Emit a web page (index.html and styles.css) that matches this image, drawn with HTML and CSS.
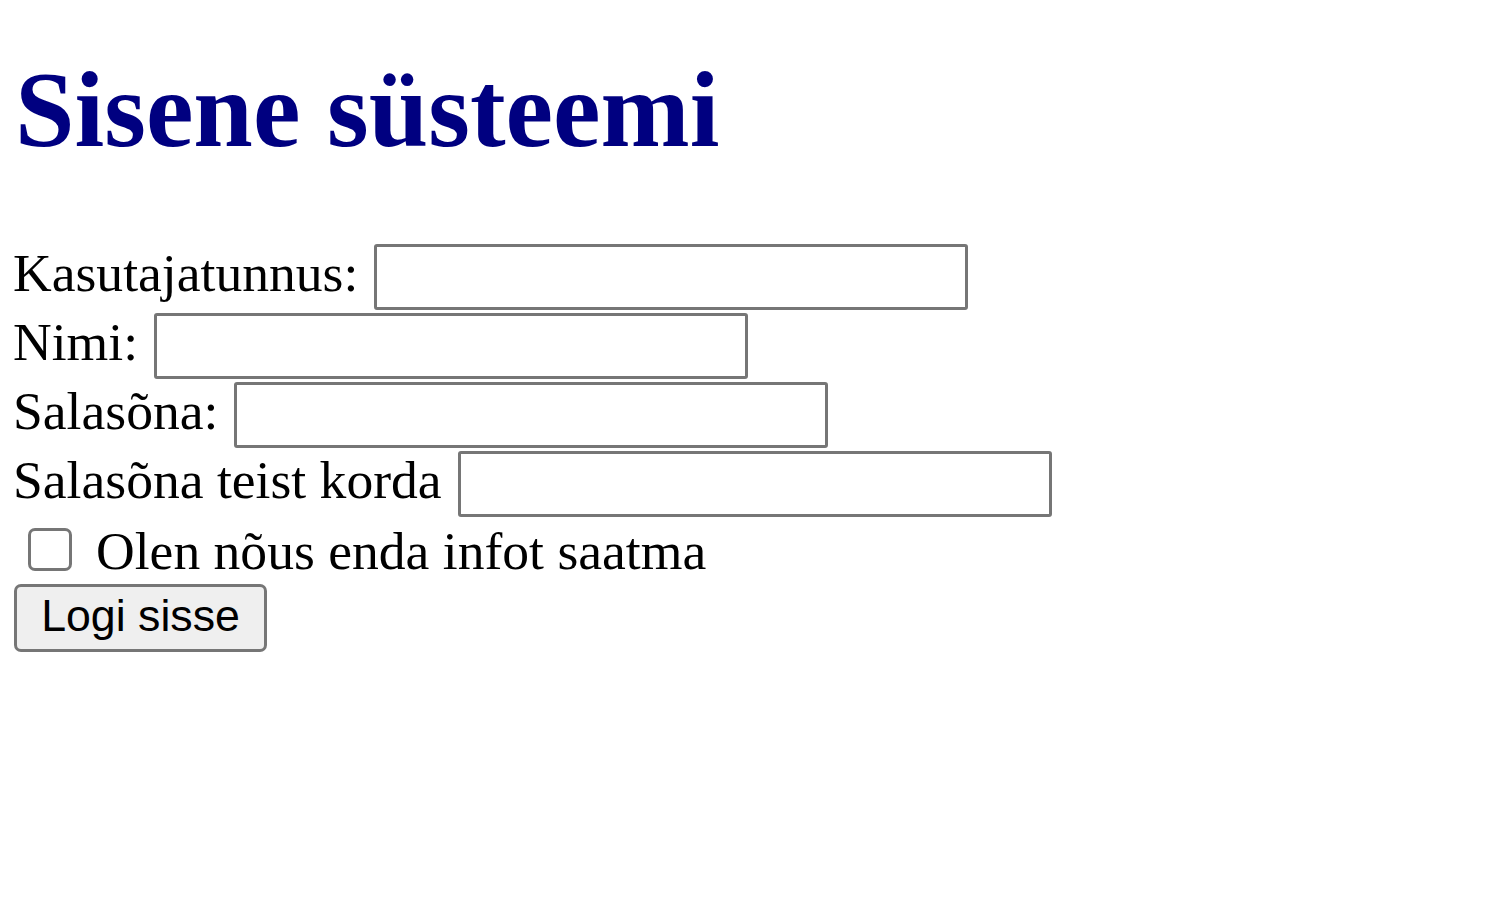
FILE: index.html
```html
<!DOCTYPE html>
<html lang="et">
<head>
<meta charset="utf-8">
<title>Sisene süsteemi</title>
<link rel="stylesheet" href="styles.css">
</head>
<body>
<h1 class="title">Sisene süsteemi</h1>
<form class="login">
  <div class="row"><label class="lbl" for="user">Kasutajatunnus:</label><input class="field" id="user" type="text"></div>
  <div class="row"><label class="lbl" for="name">Nimi:</label><input class="field" id="name" type="text"></div>
  <div class="row"><label class="lbl" for="pw">Salasõna:</label><input class="field" id="pw" type="password"></div>
  <div class="row"><label class="lbl" for="pw2">Salasõna teist korda</label><input class="field" id="pw2" type="password"></div>
  <div class="row check-row"><input class="check" id="agree" type="checkbox"><label class="lbl" for="agree">Olen nõus enda infot saatma</label></div>
  <button class="btn" type="submit">Logi sisse</button>
</form>
</body>
</html>
```
FILE: styles.css
```css
html, body {
  margin: 0;
  background: #ffffff;
}
body {
  padding: 0 0 0 13px;
  font-family: "Liberation Serif", "Times New Roman", serif;
  font-size: 53.6px;
  color: #000000;
}
.title {
  margin: 49px 0 70px 0;
  padding-left: 2px;
  font-size: 107px;
  font-weight: bold;
  line-height: 123px;
  color: #000080;
}
.login {
  display: flex;
  flex-direction: column;
  align-items: flex-start;
}
.row {
  display: flex;
  align-items: center;
  height: 69px;
  gap: 16px;
}
.lbl {
  line-height: 61px;
  padding-bottom: 7px;
  white-space: nowrap;
}
.field {
  box-sizing: border-box;
  width: 594px;
  height: 66px;
  margin: 0;
  padding: 0 6px;
  border: 3px solid #767676;
  border-radius: 3px;
  background: #ffffff;
  font-size: 44px;
}
.check-row {
  height: 66px;
  gap: 24px;
}
.check {
  appearance: none;
  -webkit-appearance: none;
  box-sizing: border-box;
  width: 44px;
  height: 43px;
  margin: 0 0 4px 15px;
  border: 3px solid #767676;
  border-radius: 7px;
  background: #ffffff;
}
.check-row .lbl {
  padding-bottom: 0;
}
.btn {
  box-sizing: border-box;
  width: 253px;
  height: 68px;
  margin: 0 0 0 1px;
  padding: 0 0 4px 0;
  border: 3px solid #767676;
  border-radius: 7px;
  background: #efefef;
  font-family: "Liberation Sans", Arial, sans-serif;
  font-size: 44.7px;
  color: #000000;
}
```
